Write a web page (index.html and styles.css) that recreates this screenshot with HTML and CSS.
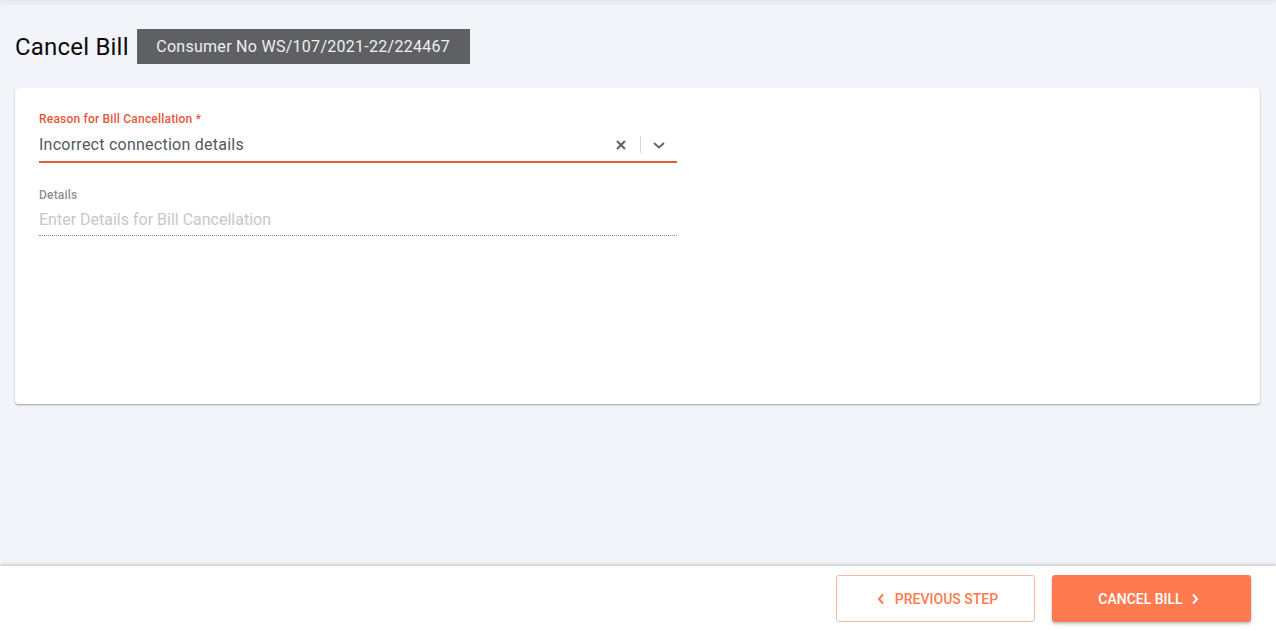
FILE: index.html
```html
<!DOCTYPE html>
<html>
<head>
<meta charset="utf-8">
<link rel="stylesheet" href="styles.css">
</head>
<body>
<div class="app">
  <div class="topshade"></div>
  <main class="main">
    <div class="page-head">
      <h1 class="title">Cancel Bill</h1>
      <div class="badge">Consumer No WS/107/2021-22/224467</div>
    </div>
    <section class="card">
      <div class="field">
        <label class="label label-active">Reason for Bill Cancellation *</label>
        <div class="select">
          <span class="select-value">Incorrect connection details</span>
          <span class="select-icons">
            <svg class="ic-clear" width="12" height="12" viewBox="0 0 12 12"><path d="M2 2 L10 10 M10 2 L2 10" stroke="#666" stroke-width="2.2" stroke-linecap="butt"/></svg>
            <span class="sep"></span>
            <svg class="ic-chev" width="14" height="10" viewBox="0 0 14 10"><path d="M2 3 L7 7.5 L12 3" fill="none" stroke="#666" stroke-width="2"/></svg>
          </span>
        </div>
      </div>
      <div class="field field2">
        <label class="label">Details</label>
        <div class="text-input">Enter Details for Bill Cancellation</div>
      </div>
    </section>
  </main>
  <footer class="footer">
    <button class="btn btn-outline">
      <svg width="8" height="12" viewBox="0 0 8 12"><path d="M6 1.5 L2 6 L6 10.5" fill="none" stroke="#fe7a51" stroke-width="2"/></svg>
      <span>PREVIOUS STEP</span>
    </button>
    <button class="btn btn-primary">
      <span>CANCEL BILL</span>
      <svg width="8" height="12" viewBox="0 0 8 12"><path d="M2 1.5 L6 6 L2 10.5" fill="none" stroke="#fff" stroke-width="2"/></svg>
    </button>
  </footer>
</div>
</body>
</html>
```
FILE: styles.css
```css
* { box-sizing: border-box; }
html, body { margin: 0; padding: 0; }
body {
  font-family: Roboto, "Liberation Sans", sans-serif;
  background: #f3f4f9;
  color: #0b0c0c;
}
.app {
  height: 100vh;
  display: flex;
  flex-direction: column;
}
.topshade {
  height: 1px;
  background: #e6e6ea;
  box-shadow: 0 1px 4px rgba(0,0,0,0.18);
}
.main {
  flex: 1;
  padding: 28px 16px 0 15px;
}
.page-head {
  display: flex;
  align-items: center;
  gap: 8px;
}
.title {
  margin: 0;
  font-size: 24px;
  font-weight: 400;
  color: #0b0c0c;
  line-height: 28px;
  letter-spacing: 0.2px;
}
.badge {
  background: #5f6063;
  color: #f0f0f0;
  font-size: 16px;
  letter-spacing: 0.28px;
  height: 35px;
  line-height: 35px;
  width: 333px;
  text-align: center;
}
.card {
  margin-top: 24px;
  background: #fff;
  border-radius: 4px;
  box-shadow: 0 1px 2px rgba(0,0,0,0.35);
  height: 316px;
  padding: 24px 24px;
}
.field { width: 638px; }
.label {
  display: block;
  font-size: 12px;
  line-height: 14px;
  color: #8f8f8f;
  font-weight: 500;
  letter-spacing: 0.2px;
}
.label-active { color: #e4573a; }
.select {
  display: flex;
  align-items: center;
  height: 37px;
  border-bottom: 2px solid #e0603d;
  padding-top: 2px;
}
.select-value {
  flex: 1;
  font-size: 16px;
  color: #505a5f;
  letter-spacing: 0.25px;
}
.select-icons {
  display: flex;
  align-items: center;
}
.ic-clear { margin-right: 13px; }
.sep {
  width: 1px;
  height: 17px;
  background: #d8d8d8;
  margin-right: 11px;
}
.ic-chev { margin-right: 11px; }
.field2 { margin-top: 25px; }
.text-input {
  height: 34px;
  font-size: 16px;
  color: #c8c8c8;
  padding-top: 8px;
  border-bottom: 1px dotted #8c8c8c;
}
.footer {
  height: 65px;
  background: #fff;
  box-shadow: 0 -1px 4px rgba(0,0,0,0.22);
  display: flex;
  justify-content: flex-end;
  align-items: center;
  gap: 17px;
  padding-right: 25px;
}
.btn {
  width: 199px;
  height: 47px;
  border-radius: 3px;
  font-family: Roboto, "Liberation Sans", sans-serif;
  font-size: 14px;
  font-weight: 500;
  display: flex;
  align-items: center;
  justify-content: center;
  gap: 10px;
  cursor: pointer;
}
.btn-outline {
  background: #fff;
  border: 1px solid #fdb69f;
  color: #fe7a51;
  padding-left: 10px;
}
.btn-primary {
  background: #fe7a51;
  border: none;
  color: #fff;
  gap: 8px;
  padding-right: 12px;
  box-shadow: 0 2px 3px rgba(0,0,0,0.25);
}
```
